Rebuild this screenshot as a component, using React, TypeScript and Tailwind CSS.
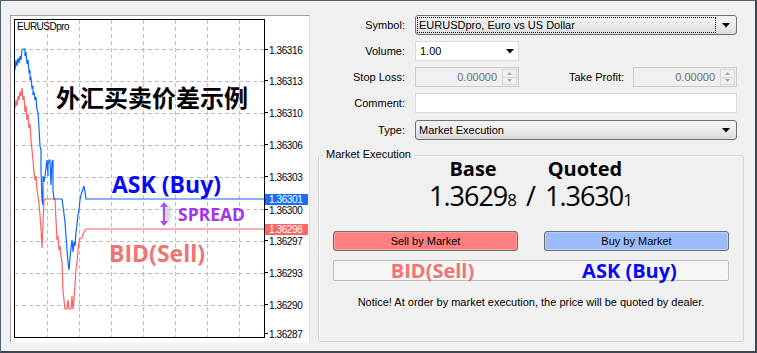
import React from "react";

const bluePts =
  "15,70 16,60 17,66 18,58 19,63 20,56 21,60 22,50 23,49 25,49 25,56 26,52 27,64 28,60 29,72 30,70 30,80 31,78 32,88 33,86 33,95 34,92 35,100 36,97 37,110 38,112 39,128 40,146 41,150 41,170 42,200 43,205 43,176 44,182 45,176 46,168 47,160 48,176 48,165 49,160 50,160 51,185 52,162 53,160 53,190 54,199 62,199 63,206 64,214 65,222 66,236 67,250 68,262 69,270 70,258 71,248 72,240 73,252 74,242 75,246 76,232 77,224 78,215 79,210 80,200 81,195 82,192 83,189 84,186 85,192 86,199 264,199";

const redPts =
  "15,108 16,100 17,106 18,96 19,100 20,92 21,96 22,88 23,100 24,96 25,112 26,106 27,120 28,114 29,128 30,124 31,140 32,150 33,160 34,172 35,180 36,176 37,190 38,196 39,204 40,215 41,230 42,248 43,222 44,200 45,199 55,199 56,220 57,240 58,236 59,250 60,246 61,256 62,262 63,290 64,300 65,309 67,309 68,300 69,309 71,309 72,296 73,309 74,300 75,285 76,270 77,262 78,250 79,243 80,238 82,238 83,234 84,232 86,229 264,229";

const hGrid = [49, 81, 113, 145, 177, 209, 241, 273, 305];
const vGrid = [47, 79, 111, 143, 175, 207, 239];
const labels: [number, string][] = [
  [50, "1.36316"],
  [81, "1.36313"],
  [113, "1.36310"],
  [145, "1.36306"],
  [177, "1.36303"],
  [210, "1.36300"],
  [241, "1.36297"],
  [273, "1.36293"],
  [305, "1.36290"],
  [334, "1.36287"],
];

function Chart() {
  return (
    <div className="relative w-[300px] h-[328px] border border-t-[#a0a0a0] border-l-[#a0a0a0] border-r-[#e3e3e3] border-b-[#ffffff] bg-white">
      <svg width="298" height="326" viewBox="11 16 298 326" className="block">
        {hGrid.map((y) => (
          <line key={"h" + y} x1="15" x2="264" y1={y + 0.5} y2={y + 0.5} stroke="#bdbdbd" strokeDasharray="4 3" />
        ))}
        {vGrid.map((x) => (
          <line key={"v" + x} x1={x + 0.5} x2={x + 0.5} y1="20" y2="337" stroke="#bdbdbd" strokeDasharray="4 3" />
        ))}
        <polyline points={redPts} fill="none" stroke="#ff6060" strokeWidth="1.2" />
        <polyline points={bluePts} fill="none" stroke="#0a66ff" strokeWidth="1.2" />
        <rect x="14.5" y="19.5" width="250" height="318" fill="none" stroke="#000" strokeWidth="1" />
        {labels.map(([y, t]) => (
          <g key={t}>
            <line x1="265" x2="268" y1={y - 0.5} y2={y - 0.5} stroke="#000" />
            <text x="269" y={y + 3.5} fontSize="10" letterSpacing="-0.4" fontFamily="'Liberation Sans', Arial, sans-serif" fill="#000">
              {t}
            </text>
          </g>
        ))}
        <rect x="265" y="194" width="43" height="11" fill="#1a6ef5" />
        <text x="269" y="203" fontSize="10" letterSpacing="-0.4" fontFamily="'Liberation Sans', Arial, sans-serif" fill="#fff">
          1.36301
        </text>
        <rect x="265" y="224" width="43" height="11" fill="#ff6666" />
        <text x="269" y="233" fontSize="10" letterSpacing="-0.4" fontFamily="'Liberation Sans', Arial, sans-serif" fill="#fff">
          1.36298
        </text>
        <text x="17" y="29.5" fontSize="10" letterSpacing="-0.5" fontFamily="'Liberation Sans', Arial, sans-serif" fill="#000">
          EURUSDpro
        </text>
      </svg>
      <div className="absolute left-[45px] top-[69px] text-[24px] leading-none font-bold text-black whitespace-nowrap font-['Noto_Sans_CJK_SC',sans-serif]">
        外汇买卖价差示例
      </div>
      <div className="absolute left-[101px] top-[157px] text-[23px] leading-none font-bold text-[#0a0aee] whitespace-nowrap font-['Open_Sans',sans-serif]">
        ASK (Buy)
      </div>
      <svg className="absolute left-[144px] top-[183px]" width="26" height="30" viewBox="0 0 26 30">
        <defs>
          <filter id="blur" x="-50%" y="-50%" width="200%" height="200%">
            <feGaussianBlur stdDeviation="2" />
          </filter>
        </defs>
        <ellipse cx="12" cy="15" rx="3.5" ry="10" fill="#a8a8a8" opacity="0.55" filter="url(#blur)" />
        <line x1="9" y1="5" x2="9" y2="25" stroke="#a050e8" strokeWidth="2" />
        <path d="M5 8 L9 3 L13 8 Z" fill="#a050e8" />
        <path d="M5 22 L9 27 L13 22 Z" fill="#a050e8" />
      </svg>
      <div className="absolute left-[167px] top-[190px] text-[17.5px] leading-none font-bold text-[#a335f0] whitespace-nowrap font-['Open_Sans',sans-serif]">
        SPREAD
      </div>
      <div className="absolute left-[98px] top-[226px] text-[23px] leading-none font-bold text-[#f07474] whitespace-nowrap font-['Open_Sans',sans-serif]">
        BID(Sell)
      </div>
    </div>
  );
}

function Arrow() {
  return (
    <svg width="8" height="5" viewBox="0 0 8 5" className="block">
      <path d="M0 0 H8 L4 4.5 Z" fill="#000" />
    </svg>
  );
}

function Select({ text, focus }: { text: string; focus?: boolean }) {
  return (
    <div className="flex items-center w-[322px] h-[20px] rounded-[3px] border border-[#707070] bg-linear-to-b from-[#f3f3f3] via-[#ebebeb] to-[#dbdbdb] pl-[1px] pr-[6px]">
      <div className={"flex-1 h-[16px] flex items-center pl-[1px] " + (focus ? "border border-dotted border-[#000] mr-[6px]" : "pl-[2px]")}>
        <span className="text-[11px] text-black leading-none">{text}</span>
      </div>
      <div className="ml-auto">
        <Arrow />
      </div>
    </div>
  );
}

function Spin() {
  return (
    <div className="flex items-center w-[104px] h-[20px] border border-[#cccccc] bg-[#f0f0f0]">
      <span className="flex-1 text-right pr-[5px] text-[11px] text-[#6d6d6d] leading-none">0.00000</span>
      <div className="flex flex-col w-[15px] h-[16px] mr-[1px]">
        <div className="flex-1 border border-[#d6d6d6] flex items-center justify-center">
          <svg width="5" height="3" viewBox="0 0 5 3">
            <path d="M0 3 L2.5 0 L5 3 Z" fill="#a8a8a8" />
          </svg>
        </div>
        <div className="flex-1 border border-t-0 border-[#d6d6d6] flex items-center justify-center">
          <svg width="5" height="3" viewBox="0 0 5 3">
            <path d="M0 0 L2.5 3 L5 0 Z" fill="#a8a8a8" />
          </svg>
        </div>
      </div>
    </div>
  );
}

function Label({ children }: { children: React.ReactNode }) {
  return <div className="w-[95px] text-right text-[11px] text-black leading-none">{children}</div>;
}

function Form() {
  return (
    <div className="flex flex-col w-[444px] font-['Liberation_Sans',Arial,sans-serif]">
      <div className="flex items-center gap-[10px] h-[20px]">
        <Label>Symbol:</Label>
        <Select text="EURUSDpro, Euro vs US Dollar" focus />
      </div>
      <div className="flex items-center gap-[10px] h-[20px] mt-[6px]">
        <Label>Volume:</Label>
        <div className="flex items-center w-[104px] h-[20px] border border-[#dcdcdc] bg-white pl-[4px] pr-[4px]">
          <span className="text-[11px] text-black leading-none">1.00</span>
          <div className="ml-auto">
            <Arrow />
          </div>
        </div>
      </div>
      <div className="flex items-center h-[20px] mt-[6px]">
        <Label>Stop Loss:</Label>
        <div className="ml-[10px]">
          <Spin />
        </div>
        <div className="w-[105px] text-right text-[11px] text-black leading-none">Take Profit:</div>
        <div className="ml-[9px]">
          <Spin />
        </div>
      </div>
      <div className="flex items-center gap-[10px] h-[20px] mt-[6px]">
        <Label>Comment:</Label>
        <div className="w-[322px] h-[20px] border border-[#dcdcdc] bg-white" />
      </div>
      <div className="flex items-center gap-[10px] h-[20px] mt-[7px]">
        <Label>Type:</Label>
        <Select text="Market Execution" />
      </div>
      <div className="relative ml-[8px] mt-[15px] w-[426px] h-[187px] rounded-[3px] border border-[#d3d3d3] shadow-[inset_1px_1px_0_#ffffff]">
        <div className="absolute left-[4px] top-[-7px] px-[3px] bg-[#f0f0f0] text-[11px] leading-none text-black">Market Execution</div>
        <div className="flex flex-col items-center pt-[3px]">
          <div className="grid grid-cols-[auto_auto_auto] items-end font-['Open_Sans',sans-serif] text-black">
            <div className="text-center text-[20px] font-bold leading-none">Base</div>
            <div />
            <div className="text-center text-[20px] font-bold leading-none pr-[8px]">Quoted</div>
            <div className="text-[27px] leading-none tracking-[-1px] mt-[3px]">
              1.3629<span className="text-[17px] tracking-normal">8</span>
            </div>
            <div className="text-[27px] leading-none px-[9px] mt-[3px]">/</div>
            <div className="text-[27px] leading-none tracking-[-1px] mt-[3px]">
              1.3630<span className="text-[17px] tracking-normal">1</span>
            </div>
          </div>
        </div>
        <div className="flex justify-between px-[14px] mt-[22px]">
          <div className="w-[185px] h-[20px] rounded-[3px] border border-[#6e6e6e] bg-[#ff8080] shadow-[inset_0_0_0_1px_#ff9a9a] flex items-center justify-center text-[11px] text-black leading-none">
            Sell by Market
          </div>
          <div className="w-[185px] h-[20px] rounded-[3px] border border-[#6e6e6e] bg-[#9dbcfb] shadow-[inset_0_0_0_1px_#b8cffc] flex items-center justify-center text-[11px] text-black leading-none">
            Buy by Market
          </div>
        </div>
        <div className="mx-[14px] mt-[9px] h-[21px] rounded-[2px] border border-[#bdbdbd] bg-[#f6f6f6] flex items-center font-['Open_Sans',sans-serif] font-bold text-[20px] leading-none">
          <div className="w-[197px] text-center text-[#f07474]">BID(Sell)</div>
          <div className="flex-1 text-center text-[#0a0aee]">ASK (Buy)</div>
        </div>
        <div className="mt-[16px] text-center text-[11px] text-black leading-none">
          Notice! At order by market execution, the price will be quoted by dealer.
        </div>
      </div>
    </div>
  );
}

export default function App() {
  return (
    <div className="w-[757px] h-[353px] bg-[#f0f0f0] border-t border-l border-t-[#56606c] border-l-[#56606c] border-r-2 border-b-2 border-r-[#3e4752] border-b-[#3e4752] overflow-hidden font-['Liberation_Sans',Arial,sans-serif]">
      <div className="flex pl-[9px] pt-[14px]">
        <Chart />
        <Form />
      </div>
    </div>
  );
}
